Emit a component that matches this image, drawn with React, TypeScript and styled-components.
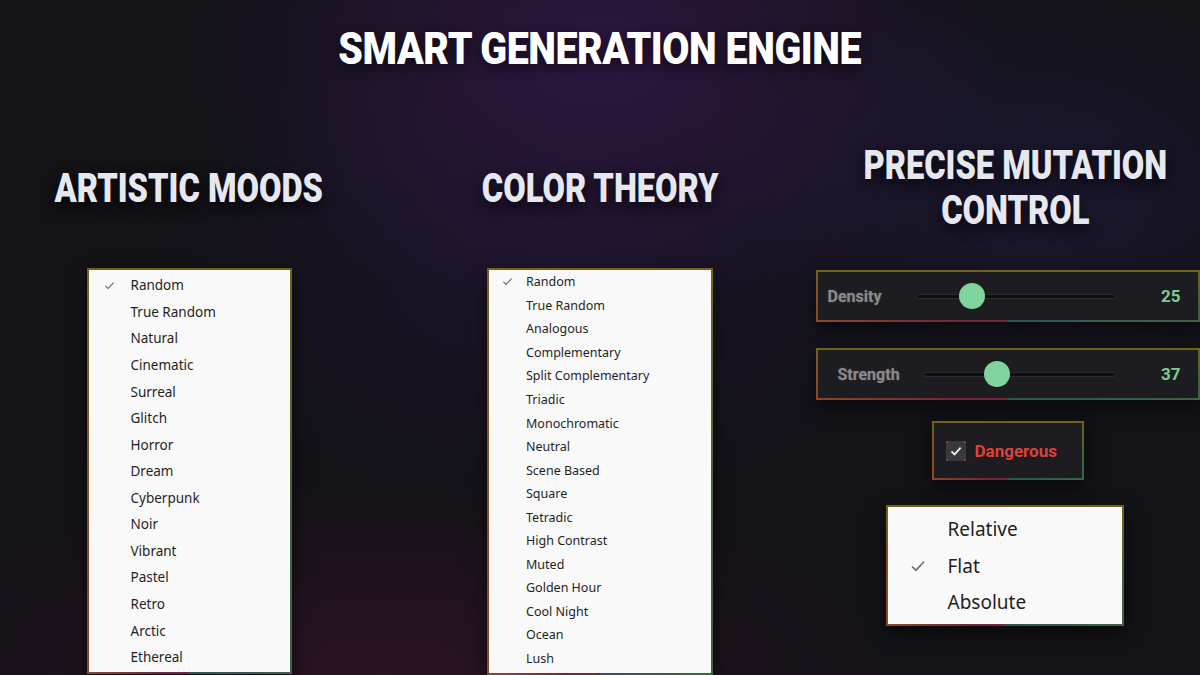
import React from 'react'
import styled, { createGlobalStyle } from 'styled-components'

const GlobalStyle = createGlobalStyle`
  html, body {
    margin: 0;
    padding: 0;
    background: #131217;
  }
  * { box-sizing: border-box; }
`

const moods = ['Random', 'True Random', 'Natural', 'Cinematic', 'Surreal', 'Glitch', 'Horror', 'Dream',
  'Cyberpunk', 'Noir', 'Vibrant', 'Pastel', 'Retro', 'Arctic', 'Ethereal']

const theories = ['Random', 'True Random', 'Analogous', 'Complementary', 'Split Complementary', 'Triadic',
  'Monochromatic', 'Neutral', 'Scene Based', 'Square', 'Tetradic', 'High Contrast', 'Muted',
  'Golden Hour', 'Cool Night', 'Ocean', 'Lush']

const modes = ['Relative', 'Flat', 'Absolute']

const Page = styled.div`
  width: 1200px;
  height: 675px;
  overflow: hidden;
  display: flex;
  flex-direction: column;
  align-items: center;
  font-family: Roboto, "Noto Sans", sans-serif;
  background:
    radial-gradient(ellipse 420px 260px at 50% 8%, rgba(52, 24, 78, 0.75), rgba(52, 24, 78, 0) 100%),
    radial-gradient(ellipse 300px 200px at 86% 28%, rgba(38, 30, 80, 0.45), rgba(38, 30, 80, 0) 100%),
    radial-gradient(ellipse 520px 200px at 32% 100%, rgba(70, 20, 48, 0.45), rgba(70, 20, 48, 0) 100%),
    radial-gradient(ellipse 400px 240px at 45% 40%, rgba(36, 22, 60, 0.5), rgba(36, 22, 60, 0) 100%),
    #131217;
`

const Title = styled.h1`
  margin: 26px 0 0;
  height: 45px;
  font-size: 45px;
  line-height: 45px;
  font-weight: 900;
  color: #ffffff;
  letter-spacing: -0.5px;
  transform: scaleX(0.875);
  white-space: nowrap;
  text-shadow: 0 4px 12px rgba(0, 0, 0, 0.6);
`

const Columns = styled.div`
  margin-top: 69px;
  width: 1200px;
  display: grid;
  grid-template-columns: 378px 437px 385px;
`

const Column = styled.div<{ $shift?: number }>`
  display: flex;
  flex-direction: column;
  align-items: center;
  padding-left: ${p => p.$shift || 0}px;
`

const HeadingArea = styled.div<{ $shift?: number }>`
  height: 96px;
  display: flex;
  align-items: center;
  justify-content: center;
  padding-left: ${p => p.$shift || 0}px;
`

const Heading = styled.h2`
  margin: 0;
  font-size: 40px;
  line-height: 45px;
  font-weight: 900;
  color: #e6e8f0;
  text-align: center;
  white-space: nowrap;
  transform: scaleX(0.815);
  text-shadow: 0 6px 14px rgba(0, 0, 0, 0.75);
`

// thin multi-coloured frame used by every control
const Frame = styled.div<{ $width: number; $mt?: number; $ml?: number }>`
  width: ${p => p.$width}px;
  margin-top: ${p => p.$mt || 0}px;
  margin-left: ${p => p.$ml || 0}px;
  padding: 2px;
  flex-shrink: 0;
  background:
    linear-gradient(180deg, rgba(116, 98, 24, 1) 0%, rgba(116, 98, 24, 0) 70%),
    linear-gradient(90deg, #8a4a26 0%, #76263c 35%, #76263c 50%, #2a5856 50%, #3e6244 100%);
  box-shadow: 0 6px 16px rgba(0, 0, 0, 0.55);
`

const Menu = styled.div<{ $pt: number; $pb: number }>`
  background: #f9f9f9;
  padding: ${p => p.$pt}px 0 ${p => p.$pb}px;
`

const Item = styled.div<{ $h: number; $size: number; $check: number }>`
  height: ${p => p.$h}px;
  display: grid;
  grid-template-columns: ${p => p.$check}px 1fr;
  align-items: center;
  font-family: "Noto Sans", "Open Sans", sans-serif;
  font-size: ${p => p.$size}px;
  color: #1f1f1f;
  white-space: nowrap;
`

const CheckCell = styled.span`
  display: flex;
  justify-content: center;
  align-items: center;
`

const Tick = ({ size }: { size: number }) => (
  <svg width={size} height={size} viewBox="0 0 12 12">
    <path d="M1.5 6.4 L4.4 9.2 L10.5 2.8" fill="none" stroke="#6a6a6a" strokeWidth="1.2" />
  </svg>
)

function MenuList({ items, checked, h, size, check, pt, pb }: {
  items: string[]; checked: string; h: number; size: number; check: number; pt: number; pb: number
}) {
  return (
    <Menu $pt={pt} $pb={pb}>
      {items.map(i => (
        <Item key={i} $h={h} $size={size} $check={check}>
          <CheckCell>{i === checked && <Tick size={Math.round(size * 0.85)} />}</CheckCell>
          <span>{i}</span>
        </Item>
      ))}
    </Menu>
  )
}

const Panel = styled.div<{ $h: number }>`
  height: ${p => p.$h}px;
  background: #1d1c20;
  display: flex;
  align-items: center;
`

const SliderLabel = styled.div<{ $pl: number; $w: number }>`
  width: ${p => p.$w}px;
  padding-left: ${p => p.$pl}px;
  flex-shrink: 0;
  font-size: 16px;
  font-weight: 700;
  color: #8b8b8d;
  text-shadow: 0 0 2px rgba(140, 140, 140, 0.4);
`

const Track = styled.div`
  position: relative;
  flex: 1;
  height: 5px;
  border-radius: 3px;
  background: #0f0f11;
  border: 1px solid #2c2b2f;
`

const Thumb = styled.div`
  position: absolute;
  top: 50%;
  width: 26px;
  height: 26px;
  margin: -13px 0 0 -13px;
  border-radius: 50%;
  background: #7fd59b;
`

const Value = styled.div`
  width: 82px;
  flex-shrink: 0;
  padding-right: 17px;
  text-align: right;
  font-size: 17px;
  font-weight: 700;
  color: #79cd93;
`

function Slider({ label, value, pl, lw, mt }: { label: string; value: number; pl: number; lw: number; mt: number }) {
  return (
    <Frame $width={384} $mt={mt}>
      <Panel $h={48}>
        <SliderLabel $pl={pl} $w={lw}>{label}</SliderLabel>
        <Track>
          <Thumb style={{ left: `calc(12px + (100% - 24px) * ${value / 100})` }} />
        </Track>
        <Value>{value}</Value>
      </Panel>
    </Frame>
  )
}

const CheckRow = styled(Panel)`
  padding: 0 22px 0 12px;
  gap: 9px;
`

const CheckBox = styled.span`
  width: 20px;
  height: 20px;
  display: flex;
  align-items: center;
  justify-content: center;
  border-radius: 2px;
  background:
    radial-gradient(circle at 1px 1px, #d0392e 1.3px, transparent 1.6px),
    radial-gradient(circle at 19px 1px, #d0392e 1.3px, transparent 1.6px),
    radial-gradient(circle at 1px 19px, #d0392e 1.3px, transparent 1.6px),
    radial-gradient(circle at 19px 19px, #d0392e 1.3px, transparent 1.6px),
    #39383c;
`

const CheckLabel = styled.span`
  font-size: 17px;
  font-weight: 700;
  color: #dd4238;
`

export default function App() {
  return (
    <Page>
      <GlobalStyle />
      <Title>SMART GENERATION ENGINE</Title>
      <Columns>
        <Column>
          <HeadingArea><Heading>ARTISTIC MOODS</Heading></HeadingArea>
          <Frame $width={205} $mt={32}>
            <MenuList items={moods} checked="Random" h={26.57} size={13.5} check={42} pt={2} pb={2} />
          </Frame>
        </Column>
        <Column $shift={7}>
          <HeadingArea><Heading>COLOR THEORY</Heading></HeadingArea>
          <Frame $width={226} $mt={32}>
            <MenuList items={theories} checked="Random" h={23.56} size={12.5} check={37} pt={0} pb={3} />
          </Frame>
        </Column>
        <Column>
          <HeadingArea $shift={15}><Heading>PRECISE MUTATION<br />CONTROL</Heading></HeadingArea>
          <Slider label="Density" value={25} pl={10} lw={98} mt={34} />
          <Slider label="Strength" value={37} pl={20} lw={105} mt={26} />
          <Frame $width={152} $mt={21}>
            <CheckRow $h={55}>
              <CheckBox>
                <svg width="14" height="14" viewBox="0 0 14 14">
                  <path d="M2.5 7.5 L5.6 10.4 L11.6 3.6" fill="none" stroke="#f2f2f2" strokeWidth="1.8" />
                </svg>
              </CheckBox>
              <CheckLabel>Dangerous</CheckLabel>
            </CheckRow>
          </Frame>
          <Frame $width={238} $mt={25} $ml={-6}>
            <MenuList items={modes} checked="Flat" h={36.5} size={19} check={60} pt={4} pb={3} />
          </Frame>
        </Column>
      </Columns>
    </Page>
  )
}
